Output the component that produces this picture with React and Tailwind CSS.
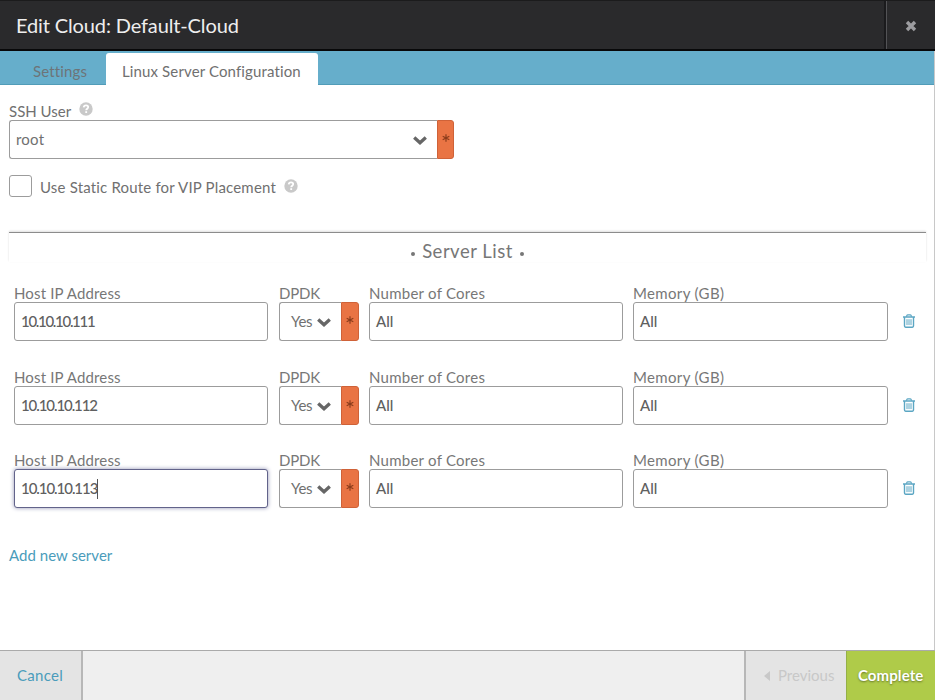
import React from "react";

const servers = [
  { ip: "10.10.10.111", tracking: "tracking-[-1.3px]", height: "h-[84px]", focused: false },
  { ip: "10.10.10.112", tracking: "tracking-[-1.08px]", height: "h-[83px]", focused: false },
  { ip: "10.10.10.113", tracking: "tracking-[-1.05px]", height: "h-[80px]", focused: true },
];

function Help() {
  return (
    <svg width="14" height="14" viewBox="0 0 14 14" className="block">
      <circle cx="7" cy="7" r="6.7" fill="#c9c9c9" />
      <path d="M4.7 5.4C4.8 4 5.8 3.3 7 3.3c1.3 0 2.2.7 2.2 1.8 0 1.6-2 1.6-2 3.2" fill="none" stroke="#fff" strokeWidth="1.8" />
      <rect x="6.3" y="9.2" width="1.8" height="1.8" fill="#fff" />
    </svg>
  );
}

function Chevron() {
  return (
    <svg width="14" height="10" viewBox="0 0 14 10" className="block">
      <path d="M1.2 2.6 7 7.8l5.8-5.2" fill="none" stroke="#666" strokeWidth="3.3" />
    </svg>
  );
}

function Required({ className }) {
  return (
    <div className={`flex shrink-0 justify-center rounded-r-[3px] border border-[#cf6238] bg-[#e97444] pt-[13px] ${className}`}>
      <svg width="8" height="8" viewBox="0 0 8 8">
        <path d="M4 .3v7.4M.7 2.2l6.6 3.6M7.3 2.2.7 5.8" stroke="#8b3d1c" strokeWidth="1.2" />
      </svg>
    </div>
  );
}

function Trash() {
  return (
    <svg width="12" height="14" viewBox="0 0 12 14" fill="none" stroke="#5ba6c3" className="block">
      <path d="M0 3h12" strokeWidth="1.5" />
      <path d="M3.3 2.6 4 1.3q.2-.5.8-.5h2.4q.6 0 .8.5l.7 1.3" strokeWidth="1.3" />
      <path d="M1.5 3v9.1q0 1.1 1.1 1.1h6.8q1.1 0 1.1-1.1V3" strokeWidth="1.4" />
      <path d="M4 5.2v5.9M6 5.2v5.9M8 5.2v5.9" strokeWidth="1" />
    </svg>
  );
}

function Field({ label, labelClass, value, valueClass, width, focused }) {
  return (
    <div className={`shrink-0 ${width}`}>
      <div className="h-4 leading-[14px] text-[#777]">
        <span className={labelClass}>{label}</span>
      </div>
      <div
        className={`flex h-[39px] items-center rounded-[3px] border bg-white pl-[6px] font-medium text-[#606060] ${
          focused ? "border-[#62638a] shadow-[0_0_4px_#9294b5]" : "border-[#9c9c9c]"
        }`}
      >
        <span className={valueClass}>{value}</span>
        {focused && <span className="h-5 w-px bg-[#555]" />}
      </div>
    </div>
  );
}

function ServerRow({ server }) {
  return (
    <div className={`flex pl-[14px] ${server.height}`}>
      <Field label="Host IP Address" labelClass="tracking-[0.15px]" value={server.ip} valueClass={server.tracking} width="w-[254px]" focused={server.focused} />
      <div className="ml-[11px] w-[80px] shrink-0">
        <div className="h-4 leading-[14px] tracking-[-0.2px] text-[#777]">DPDK</div>
        <div className="flex h-[39px]">
          <div className="flex w-[62px] items-center rounded-l-[3px] border border-r-0 border-[#9c9c9c] pl-[11px] text-[#707070]">
            <span className="w-[26px] tracking-[-0.3px]">Yes</span>
            <Chevron />
          </div>
          <Required className="w-[18px]" />
        </div>
      </div>
      <div className="w-[10px] shrink-0" />
      <Field label="Number of Cores" labelClass="tracking-[0.25px]" value="All" valueClass="" width="w-[254px]" />
      <div className="w-[10px] shrink-0" />
      <Field label="Memory (GB)" labelClass="tracking-[0.35px]" value="All" valueClass="" width="w-[255px]" />
      <div className="ml-[15px] pt-[28px]">
        <Trash />
      </div>
    </div>
  );
}

export default function App() {
  return (
    <div className="flex h-[700px] w-[935px] flex-col overflow-hidden bg-white text-[15px] text-[#707070] [font-family:Lato,'Liberation_Sans',sans-serif]">
      <header className="flex h-[51px] shrink-0 border-t border-b-2 border-t-[#1b1b1c] border-b-[#080809] bg-[#2a2a2c]">
        <div className="flex flex-1 items-center pl-4 text-[20px] text-[#eee]">
          <span className="tracking-[-0.13px]">Edit Cloud: Default-Cloud</span>
        </div>
        <div className="w-[2px] bg-[#1b1b1d]" />
        <div className="flex w-[49px] items-center justify-center border-l border-[#535356] pt-[2px]">
          <svg width="12" height="12" viewBox="0 0 12 12">
            <path d="m2 2 8 8M10 2l-8 8" stroke="#9c9ca0" strokeWidth="3.4" />
          </svg>
        </div>
      </header>
      <div className="flex min-h-0 flex-1 flex-col border-r border-[#c8c8c8]">
        <nav className="flex h-[34px] shrink-0 items-end border-b border-[#519cb8] bg-[#66aecb]">
          <div className="flex h-8 w-[106px] items-center pt-[6px] pl-[33px] text-[#6d7478]">
            <span className="tracking-[0.15px]">Settings</span>
          </div>
          <div className="-mb-px flex h-8 w-[212px] items-center rounded-t-[3px] bg-white pt-[5px] pl-4">
            <span className="tracking-[0.13px]">Linux Server Configuration</span>
          </div>
        </nav>
        <main className="flex-1">
          <div className="flex h-[35px] items-end gap-2 pl-[9px]">
            <span className="leading-[18px]">SSH User</span>
            <span className="pb-1"><Help /></span>
          </div>
          <div className="flex h-[39px] pl-[9px]">
            <div className="flex w-[428px] items-center justify-between rounded-l-[3px] border border-r-0 border-[#9c9c9c] pr-[10px] pl-[6px]">
              <span className="tracking-[0.2px]">root</span>
              <Chevron />
            </div>
            <Required className="w-[17px]" />
          </div>
          <div className="flex h-[54px] items-center pl-[9px]">
            <div className="h-[22px] w-[23px] rounded-[3px] border border-[#9c9c9c]" />
            <span className="ml-2 w-[252px] pt-[3px] tracking-[0.18px] whitespace-nowrap">
              Use Static Route for VIP Placement
            </span>
            <span className="-ml-2"><Help /></span>
          </div>
          <div className="mt-[19px] mr-2 ml-[9px] h-[30px] border-t border-[#8c8c8c] shadow-[0_-1px_2px_#ddd]">
            <div className="flex h-[38px] items-center justify-center gap-[7px] text-[18.5px] text-[#777]">
              <span className="mt-[3px] size-1 rounded-full bg-[#777]" />
              <span className="tracking-[0.5px]">Server List</span>
              <span className="mt-[3px] size-1 rounded-full bg-[#777]" />
            </div>
          </div>
          <div className="pt-[24px]">
            {servers.map((s) => (
              <ServerRow key={s.ip} server={s} />
            ))}
          </div>
          <div className="pt-[11px] pl-[9px] text-[#4a9cbb]">
            <span className="tracking-[0.03px]">Add new server</span>
          </div>
        </main>
      </div>
      <footer className="flex h-[50px] shrink-0 border-t border-[#aaa] bg-[#efefef]">
        <div className="flex w-[83px] items-center border-r-2 border-[#b7b7b7] bg-[#e4e4e4] pl-[17px] text-[#4a9cbb]">
          <span className="tracking-[0.3px]">Cancel</span>
        </div>
        <div className="flex-1" />
        <div className="flex w-[102px] items-center border-l-2 border-[#b7b7b7] bg-[#e4e4e4] text-[#c8c8c8]">
          <svg width="6" height="10" viewBox="0 0 6 10" className="ml-[18px]">
            <path d="M6 0v10L0 5Z" fill="#c8c8c8" />
          </svg>
          <span className="ml-2">Previous</span>
        </div>
        <div className="flex w-[89px] items-center border-l border-[#95b047] bg-[#afcb49] pl-[11px] font-bold text-white [text-shadow:0_1px_2px_#66772a]">
          <span className="tracking-[0.1px]">Complete</span>
        </div>
      </footer>
    </div>
  );
}
